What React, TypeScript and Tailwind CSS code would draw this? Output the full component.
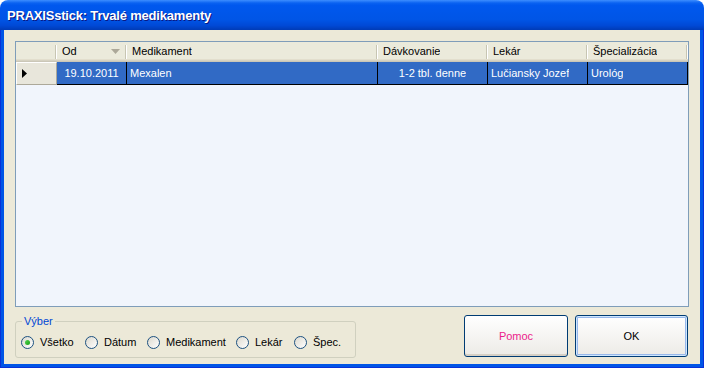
import React, { useState } from 'react';

interface Column {
  key: string;
  title: string;
  width: string;
  align: 'left' | 'center';
  sorted?: boolean;
}

const columns: Column[] = [
  { key: 'od', title: 'Od', width: 'w-[70px]', align: 'center', sorted: true },
  { key: 'med', title: 'Medikament', width: 'w-[251px]', align: 'left' },
  { key: 'dav', title: 'Dávkovanie', width: 'w-[110px]', align: 'center' },
  { key: 'lek', title: 'Lekár', width: 'w-[100px]', align: 'left' },
  { key: 'spec', title: 'Špecializácia', width: 'w-[100px]', align: 'left' },
];

const rows: Record<string, string>[] = [
  {
    od: '19.10.2011',
    med: 'Mexalen',
    dav: '1-2 tbl. denne',
    lek: 'Lučiansky Jozef',
    spec: 'Urológ',
  },
];

const filters = [
  { label: 'Všetko', width: 'w-[64px]' },
  { label: 'Dátum', width: 'w-[62px]' },
  { label: 'Medikament', width: 'w-[89px]' },
  { label: 'Lekár', width: 'w-[58px]' },
  { label: 'Špec.', width: 'w-[50px]' },
];

function Radio({ checked }: { checked: boolean }) {
  return (
    <span className="w-[13px] h-[13px] shrink-0 rounded-full border border-[#1C5180] bg-linear-to-br from-[#DCD9CE] to-white flex items-center justify-center">
      {checked && (
        <span className="w-[5px] h-[5px] rounded-full bg-linear-to-br from-[#55D551] to-[#09A009]" />
      )}
    </span>
  );
}

function HeaderSep() {
  return (
    <span className="self-center h-[14px] w-[2px] shrink-0 border-l border-[#C7C5B2] border-r border-r-white" />
  );
}

export default function App() {
  const [filter, setFilter] = useState(0);

  return (
    <div className="w-[704px] h-[368px] flex flex-col font-['Liberation_Sans',Arial,sans-serif] text-[11px] text-black">
      {/* Title bar */}
      <div className="h-[30px] shrink-0 rounded-t-[8px] bg-[linear-gradient(to_bottom,#3D8EFF_0%,#0A62F1_10%,#0058EE_18%,#0055E6_65%,#0049D6_85%,#003BB6_100%)] flex items-center pl-[7px] pt-[1px]">
        <span className="text-white font-bold text-[13px] tracking-[-0.2px] [text-shadow:1px_1px_0_#0A1883]">
          PRAXISstick: Trvalé medikamenty
        </span>
      </div>

      {/* Frame */}
      <div className="flex-1 flex flex-col bg-[#0831D9] px-[1px] pb-[1px]">
        <div className="flex-1 flex flex-col bg-[#0055E6] px-[3px] pb-[3px]">
          <div className="flex-1 flex flex-col bg-[#ECE9D8] px-[11px] pt-[11px]">
            {/* Grid */}
            <div className="h-[266px] border border-[#7F9DB9] bg-[#F1F5FC] flex flex-col">
              <div className="h-[20px] flex bg-[#EBEADB] shadow-[inset_0_-1px_0_#CBC7B8,inset_0_-2px_0_#D6D2C2,inset_0_-3px_0_#E2DECD]">
                <div className="w-[41px] flex justify-end">
                  <HeaderSep />
                </div>
                {columns.map((c) => (
                  <div key={c.key} className={`${c.width} flex items-center justify-between pl-[5px] pb-[1px]`}>
                    <span className="truncate">{c.title}</span>
                    <span className="flex items-center gap-[5px] h-full">
                      {c.sorted && (
                        <svg width="9" height="5" viewBox="0 0 9 5">
                          <path d="M0 0 H9 L4.5 5 Z" fill="#ACA899" />
                        </svg>
                      )}
                      <HeaderSep />
                    </span>
                  </div>
                ))}
              </div>

              {rows.map((r, i) => (
                <div key={i} className="h-[23px] flex">
                  <div className="w-[41px] bg-[#E8E6DB] border border-t-white border-l-white border-r-[#ACA899] border-b-[#ACA899] flex items-center pl-[5px]">
                    <svg width="5" height="9" viewBox="0 0 5 9">
                      <path d="M0 0 L5 4.5 L0 9 Z" fill="#000" />
                    </svg>
                  </div>
                  {columns.map((c) => (
                    <div
                      key={c.key}
                      className={`${c.width} bg-[#316AC5] text-white border-r border-b border-black flex items-center px-[3px] ${
                        c.align === 'center' ? 'justify-center' : 'justify-start'
                      }`}
                    >
                      <span className="truncate">{r[c.key]}</span>
                    </div>
                  ))}
                </div>
              ))}
            </div>

            {/* Bottom */}
            <div className="flex items-start pt-[8px]">
              <div className="relative mt-[6px] w-[341px] h-[37px] border border-[#D0D0BF] rounded-[3px] flex items-center px-[5px] pt-[5px]">
                <span className="absolute left-[6px] -top-[7px] px-[2px] leading-[13px] bg-[#ECE9D8] text-[#0046D5]">
                  Výber
                </span>
                {filters.map((f, i) => (
                  <label
                    key={f.label}
                    onClick={() => setFilter(i)}
                    className={`${f.width} flex items-center gap-[6px] shrink-0`}
                  >
                    <Radio checked={filter === i} />
                    <span>{f.label}</span>
                  </label>
                ))}
              </div>

              <div className="ml-auto mr-[1px] flex gap-[7px]">
                <button className="w-[104px] h-[42px] rounded-[3px] border border-[#003C74] bg-linear-to-b from-white to-[#ECEBE6] shadow-[inset_0_-2px_0_#D6D0C5] text-[#EC1C8C]">
                  Pomoc
                </button>
                <button className="w-[113px] h-[42px] rounded-[3px] border border-[#003C74] bg-linear-to-b from-white to-[#ECEBE6] shadow-[inset_0_0_0_1px_#CEE7FF,inset_0_0_0_2px_#98B8EA] text-black">
                  OK
                </button>
              </div>
            </div>
          </div>
        </div>
      </div>
    </div>
  );
}
